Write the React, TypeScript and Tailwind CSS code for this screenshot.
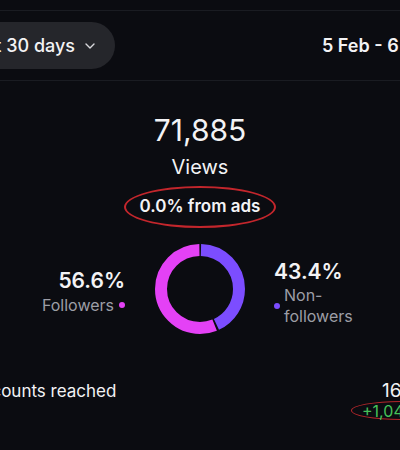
import React from "react";

const C = 2 * Math.PI * 39;
const GAP = 2;

const Donut = () => {
  const purple = 0.434 * C;
  const pink = 0.566 * C;
  return (
    <svg width="90" height="90" viewBox="0 0 90 90">
      <g transform="rotate(-90 45 45)">
        <circle
          cx="45"
          cy="45"
          r="39"
          fill="none"
          stroke="#7c4dff"
          strokeWidth="12"
          strokeDasharray={`${purple - GAP} ${C}`}
          strokeDashoffset={-GAP / 2}
        />
        <circle
          cx="45"
          cy="45"
          r="39"
          fill="none"
          stroke="#e441f6"
          strokeWidth="12"
          strokeDasharray={`${pink - GAP} ${C}`}
          strokeDashoffset={-(purple + GAP / 2)}
        />
      </g>
    </svg>
  );
};

export default function App() {
  return (
    <div className="relative w-[400px] h-[450px] overflow-hidden bg-[#0b0c11] text-[#f3f3f5] font-['Inter',sans-serif]">
      <div className="h-[10px]" />
      {/* header */}
      <div className="flex h-[71px] items-center justify-between border-y border-[#1a1c22] whitespace-nowrap">
        <div className="-ml-[60px] flex h-[47px] w-[175px] items-center justify-end gap-[10px] rounded-full bg-[#25262b] pr-[20px]">
          <span className="text-[18px] font-medium">Last 30 days</span>
          <svg width="10" height="6" viewBox="0 0 10 6" fill="none">
            <path d="M1 1l4 4 4-4" stroke="#d8d8dc" strokeWidth="1.4" strokeLinecap="round" strokeLinejoin="round" />
          </svg>
        </div>
        <span className="-mr-[60px] w-[138px] text-[18px] font-semibold">5 Feb - 6 Mar</span>
      </div>

      {/* views */}
      <div className="flex flex-col items-center">
        <div className="mt-[31px] h-[36px] text-[30px] leading-[36px]">71,885</div>
        <div className="mt-[5px] h-[28px] text-[20px] leading-[28px]">Views</div>
        <div className="mt-[5px] flex h-[42px] w-[152px] items-center justify-center rounded-[50%] border-[2.5px] border-[#c3262c]">
          <span className="text-[17px] font-semibold">0.0% from ads</span>
        </div>

        {/* donut row */}
        <div className="mt-[16px] flex w-full items-center">
          <div className="mt-[6px] flex w-[125px] flex-col items-end">
            <span className="text-[21px] font-semibold leading-[26px]">56.6%</span>
            <div className="flex items-center gap-[5px]">
              <span className="text-[16px] leading-[22px] text-[#9d9ea6]">Followers</span>
              <span className="h-[6px] w-[6px] rounded-full bg-[#e441f6]" />
            </div>
          </div>
          <div className="ml-[30px]">
            <Donut />
          </div>
          <div className="ml-[29px] mt-[8px] flex flex-col">
            <span className="text-[21px] font-semibold leading-[26px]">43.4%</span>
            <div className="flex items-center gap-[4px]">
              <span className="h-[6px] w-[6px] rounded-full bg-[#7c4dff]" />
              <span className="text-[16px] leading-[21px] text-[#9d9ea6]">
                Non-
                <br />
                followers
              </span>
            </div>
          </div>
        </div>
      </div>

      {/* accounts reached */}
      <div className="mt-[44px] flex items-start justify-between whitespace-nowrap">
        <span className="-ml-[30px] text-[17px] leading-[26px]">Accounts reached</span>
        <div className="flex w-[49px] flex-col">
          <span className="ml-[31px] text-[19px] leading-[26px]">16,842</span>
          <div className="-mt-[3px] flex h-[19px] w-[100px] items-center rounded-[50%] border-[1.5px] border-[#b3262b] pl-[10px]">
            <span className="text-[16px] leading-[20px] text-[#46c25a]">+1,045</span>
          </div>
        </div>
      </div>
    </div>
  );
}
